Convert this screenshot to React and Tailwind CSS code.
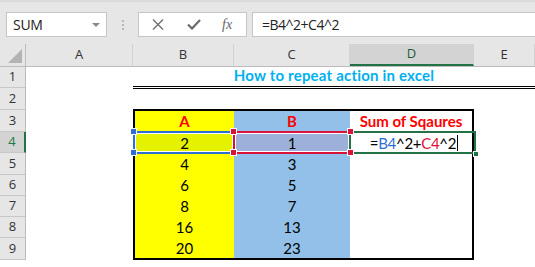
import React from "react";

const rowHeights = [21, 22, 22, 21, 22, 21, 21, 21, 22];

const cols = [
  { key: "A", w: "w-[107px]" },
  { key: "B", w: "w-[101px]" },
  { key: "C", w: "w-[116px]" },
  { key: "D", w: "w-[124px]" },
  { key: "E", w: "flex-1" },
];

const data = [
  [2, 1],
  [4, 3],
  [6, 5],
  [8, 7],
  [16, 13],
  [20, 23],
];

const dataHeights = ["h-[22px]", "h-[21px]", "h-[21px]", "h-[21px]", "h-[21px]", "h-[20px]"];

const Handle = ({ className }) => (
  <div className={`absolute w-[7px] h-[7px] border border-white ${className}`} />
);

const Toolbar = () => (
  <div className="h-[44px] bg-[#e6e6e6] border-t-2 border-[#dadada] flex items-start pt-[10px] pl-[6px]">
    {/* name box */}
    <div className="w-[101px] h-[25px] bg-white border border-[#c6c6c6] flex items-center justify-between pl-[6px] pr-[6px]">
      <span className="text-[14px] text-[#222] font-['Open_Sans',sans-serif] tracking-[-0.3px]">SUM</span>
      <span className="w-0 h-0 border-l-[4px] border-r-[4px] border-t-[4px] border-l-transparent border-r-transparent border-t-[#8a8a8a] mt-[1px]" />
    </div>
    <div className="w-[31px] h-[25px] flex flex-col items-center justify-center gap-[2px]">
      <span className="w-[2px] h-[2px] bg-[#b8b8b8]" />
      <span className="w-[2px] h-[2px] bg-[#b8b8b8]" />
      <span className="w-[2px] h-[2px] bg-[#b8b8b8]" />
    </div>
    {/* cancel / enter / fx */}
    <div className="w-[109px] h-[25px] bg-white border border-[#c6c6c6] flex items-center pl-[13px] text-[#6f6f6f]">
      <svg width="12" height="11" viewBox="0 0 12 11" className="mr-[23px]">
        <path d="M1 0.5 L11 10.5 M11 0.5 L1 10.5" stroke="#707070" strokeWidth="1.4" fill="none" />
      </svg>
      <svg width="14" height="11" viewBox="0 0 14 11" className="mr-[21px]">
        <path d="M1 5.5 L5 9.5 L13 1" stroke="#6a6a6a" strokeWidth="2.2" fill="none" />
      </svg>
      <span className="font-['Liberation_Serif',serif] italic text-[14px] text-[#666] leading-none">fx</span>
    </div>
    <div className="ml-[5px] flex-1 h-[25px] bg-white border border-r-0 border-[#c6c6c6] flex items-center pl-[9px]">
      <span className="text-[14px] text-[#222] font-['Open_Sans',sans-serif] tracking-[-0.5px]">=B4^2+C4^2</span>
    </div>
  </div>
);

const ColumnHeader = () => (
  <div className="h-[23px] flex bg-[#e6e6e6] border-b border-[#bcbcbc] font-['Open_Sans',sans-serif] text-[13px]">
    {/* select-all corner */}
    <div className="w-[26px] shrink-0 h-full border-r border-[#bcbcbc] flex items-end justify-end pr-[3px] pb-[3px]">
      <div className="w-[14px] h-[14px] shrink-0 bg-[#b3b3b3] [clip-path:polygon(100%_0,100%_100%,0_100%)]" />
    </div>
    {cols.map((c) => (
      <div
        key={c.key}
        className={`${c.w} h-full flex items-center justify-center border-r border-[#d2d2d2] ${
          c.key === "D" ? "bg-[#d3d3d3] border-b-2 border-b-[#217346] text-[#1e5c3a]" : "text-[#333]"
        }`}
      >
        {c.key}
      </div>
    ))}
  </div>
);

const RowHeaders = () => (
  <div className="w-[26px] shrink-0 bg-[#e6e6e6] border-r border-[#bcbcbc] font-['Open_Sans',sans-serif] text-[13px]">
    {rowHeights.map((h, i) => (
      <div
        key={i}
        style={{ height: h }}
        className={`flex items-center justify-center border-b border-[#c8c8c8] ${
          i === 3 ? "bg-[#d3d3d3] text-[#1e7a45] border-r-2 border-r-[#217346] -mr-px" : "text-[#333]"
        }`}
      >
        {i + 1}
      </div>
    ))}
  </div>
);

const Sheet = () => (
  <div className="flex-1 font-['Lato',sans-serif] text-[15px] text-black">
    {/* row 1: title */}
    <div className="h-[22px] ml-[107px] border-b-[3px] border-double border-black flex items-center justify-center">
      <span className="font-bold text-[#00b0f0] text-[15px] leading-none -mt-[2px] tracking-[0.2px]">How to repeat action in excel</span>
    </div>
    {/* row 2 */}
    <div className="h-[20px]" />
    {/* table B3:D9 */}
    <div className="ml-[107px] w-[341px] border-2 border-black relative">
      <div className="flex h-[21px] font-bold text-[#ff0000]">
        <div className="w-[99px] bg-[#ffff00] flex items-center justify-center">A</div>
        <div className="w-[116px] bg-[#92c0e8] flex items-center justify-center">B</div>
        <div className="flex-1 bg-white flex items-center justify-center">Sum of Sqaures</div>
      </div>
      {data.map(([a, b], i) => (
        <div key={i} className={`flex ${dataHeights[i]}`}>
          <div className={`w-[99px] flex items-center justify-center ${i === 0 ? "bg-[#e4f200]" : "bg-[#ffff00]"}`}>{a}</div>
          <div className={`w-[116px] flex items-center justify-center ${i === 0 ? "bg-[#9db0d9]" : "bg-[#92c0e8]"}`}>{b}</div>
          <div className="flex-1 bg-white flex items-center justify-center">
            {i === 0 && (
              <span className="flex items-center pl-[6px] tracking-[-0.3px]">
                =<span className="text-[#2f6fd1]">B4</span>^2+<span className="text-[#e0103a]">C4</span>^2
                <span className="w-px h-[16px] bg-black ml-[1px]" />
              </span>
            )}
          </div>
        </div>
      ))}

      {/* formula reference highlights */}
      <div className="absolute left-[-2px] top-[20px] w-[102px] h-[23px] border-2 border-[#2f6fd1] shadow-[inset_0_0_0_1px_white]" />
      <div className="absolute left-[98px] top-[20px] w-[118px] h-[23px] border-2 border-[#d9123a] shadow-[inset_0_0_0_1px_white]" />
      <div className="absolute left-[214px] top-[20px] w-[127px] h-[23px] border-2 border-[#217346]" />
      <Handle className="bg-[#2f6fd1] left-[-5px] top-[17px]" />
      <Handle className="bg-[#2f6fd1] left-[-5px] top-[38px]" />
      <Handle className="bg-[#d9123a] left-[95px] top-[17px]" />
      <Handle className="bg-[#d9123a] left-[95px] top-[38px]" />
      <Handle className="bg-[#d9123a] left-[212px] top-[17px]" />
      <Handle className="bg-[#d9123a] left-[212px] top-[38px]" />
      <div className="absolute left-[338px] top-[40px] w-[6px] h-[6px] bg-[#217346] border border-white" />
    </div>
  </div>
);

export default function App() {
  return (
    <div className="w-[535px] h-[267px] overflow-hidden bg-white">
      <Toolbar />
      <ColumnHeader />
      <div className="flex">
        <RowHeaders />
        <Sheet />
      </div>
    </div>
  );
}
